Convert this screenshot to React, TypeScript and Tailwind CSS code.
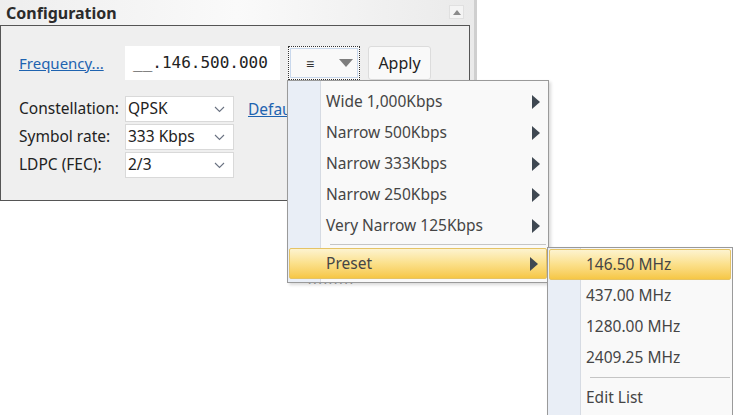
import React from "react";

const ui = { fontFamily: '"Noto Sans", "Open Sans", sans-serif' };
const mono = { fontFamily: '"DejaVu Sans Mono", "Liberation Mono", monospace' };

function Chevron() {
  return (
    <svg width="11" height="7" viewBox="0 0 11 7" className="text-gray-500">
      <path d="M1 1l4.5 4.5L10 1" fill="none" stroke="currentColor" strokeWidth="1.1" />
    </svg>
  );
}

function Arrow() {
  return (
    <svg width="8" height="14" viewBox="0 0 8 14">
      <path d="M0 0L8 7L0 14Z" fill="#3f4852" />
    </svg>
  );
}

function Select({ value }: { value: string }) {
  return (
    <div className="flex h-[26px] w-[109px] items-center justify-between border border-[#d9d9d9] bg-white pl-[2px] pr-[8px] text-[15.5px] text-[#222]">
      <span>{value}</span>
      <Chevron />
    </div>
  );
}

function MenuItem({
  label,
  active,
  sub,
}: {
  label: string;
  active?: boolean;
  sub?: boolean;
}) {
  return (
    <div
      className={
        "relative flex h-[31px] items-center justify-between pr-[8px] " +
        (active
          ? "mx-[1px] rounded-[2px] border border-[#e5c365] bg-gradient-to-b from-[#fdf3cf] via-[#fbe08a] to-[#f6c744] pl-[36px]"
          : "pl-[38px]")
      }
    >
      <span className="text-[15.5px] text-[#454545]">{label}</span>
      {sub && <Arrow />}
    </div>
  );
}

export default function App() {
  return (
    <div className="relative h-[415px] w-[733px] overflow-hidden bg-white" style={ui}>
      {/* configuration panel */}
      <div className="flex h-[201px] w-[477px] flex-col border-r-[3px] border-[#cfcfcf] bg-gradient-to-r from-[#eeeeee] via-[#fafafa] to-[#eaeaea]">
        <div className="flex h-[25px] items-end justify-between pb-[1px] pl-[6px] pr-[10px]">
          <span className="text-[16px] font-bold leading-[22px] text-[#2b2b2b]">Configuration</span>
          <div className="mb-[5px] flex h-[14px] w-[15px] items-center justify-center border border-[#e0e0e0] bg-[#f4f4f4]">
            <svg width="8" height="5" viewBox="0 0 8 5">
              <path d="M0 5L4 0L8 5Z" fill="#8a8a8a" />
            </svg>
          </div>
        </div>
        <div className="mr-[4px] flex-1 border border-[#555] bg-[#efefef] pl-[18px] pt-[20px]">
          <div className="flex items-center">
            <span className="w-[106px] text-[15px] text-[#1e63b0] underline">Frequency...</span>
            <div
              className="flex h-[34px] w-[155px] items-center bg-white pl-[8px] text-[16px] text-[#222]"
              style={mono}
            >
              __.146.500.000
            </div>
            <div className="ml-[8px] flex h-[34px] w-[72px] items-center justify-between border border-dotted border-[#333] bg-[#f9f9f9] pl-[17px] pr-[6px] outline outline-1 -outline-offset-[3px] outline-[#c9d8ec]">
              <span className="text-[14px] text-[#333]">≡</span>
              <svg width="14" height="8" viewBox="0 0 14 8">
                <path d="M0 0H14L7 8Z" fill="#7d7d7d" />
              </svg>
            </div>
            <div className="ml-[8px] flex h-[34px] w-[63px] items-center justify-center rounded-[3px] border border-[#dcdcdc] bg-[#f9f9f9] text-[16px] text-[#222]">
              Apply
            </div>
          </div>
          <div className="mt-[16px] flex gap-[2px]">
            <div className="flex flex-col gap-[2px]">
              {[
                ["Constellation:", "QPSK"],
                ["Symbol rate:", "333 Kbps"],
                ["LDPC (FEC):", "2/3"],
              ].map(([l, v]) => (
                <div key={l} className="flex items-center">
                  <span className="w-[106px] text-[15.5px] text-[#222]">{l}</span>
                  <Select value={v} />
                </div>
              ))}
            </div>
            <span className="ml-[12px] mt-[2px] text-[15.5px] text-[#1e63b0] underline">Default</span>
          </div>
        </div>
      </div>

      {/* faint text left beneath the popup */}
      <div className="absolute left-[308px] top-[275px] text-[12px] tracking-[2px] text-[#9a9a9a]">
        ·········
      </div>

      {/* bandwidth menu */}
      <div className="absolute left-[287px] top-[80px] w-[262px] border border-[#9a9a9a] bg-[#f9f9f9] pb-[3px] pt-[5px] shadow-[2px_2px_3px_rgba(0,0,0,0.15)]">
        <div className="absolute bottom-0 left-0 top-0 w-[33px] border-r border-[#d6dbe3] bg-[#e9eef6]" />
        <MenuItem label="Wide 1,000Kbps" sub />
        <MenuItem label="Narrow 500Kbps" sub />
        <MenuItem label="Narrow 333Kbps" sub />
        <MenuItem label="Narrow 250Kbps" sub />
        <MenuItem label="Very Narrow 125Kbps" sub />
        <div className="relative ml-[42px] mr-[2px] my-[3px] h-px bg-[#c5c5c5]" />
        <MenuItem label="Preset" sub active />
      </div>

      {/* preset submenu */}
      <div className="absolute left-[547px] top-[247px] w-[186px] border border-[#9a9a9a] bg-[#f9f9f9] pb-[3px] pt-[1px] shadow-[2px_2px_3px_rgba(0,0,0,0.15)]">
        <div className="absolute bottom-0 left-0 top-0 w-[33px] border-r border-[#d6dbe3] bg-[#e9eef6]" />
        <MenuItem label="146.50 MHz" active />
        <MenuItem label="437.00 MHz" />
        <MenuItem label="1280.00 MHz" />
        <MenuItem label="2409.25 MHz" />
        <div className="relative ml-[42px] mr-[2px] my-[4px] h-px bg-[#c5c5c5]" />
        <MenuItem label="Edit List" />
      </div>
    </div>
  );
}
